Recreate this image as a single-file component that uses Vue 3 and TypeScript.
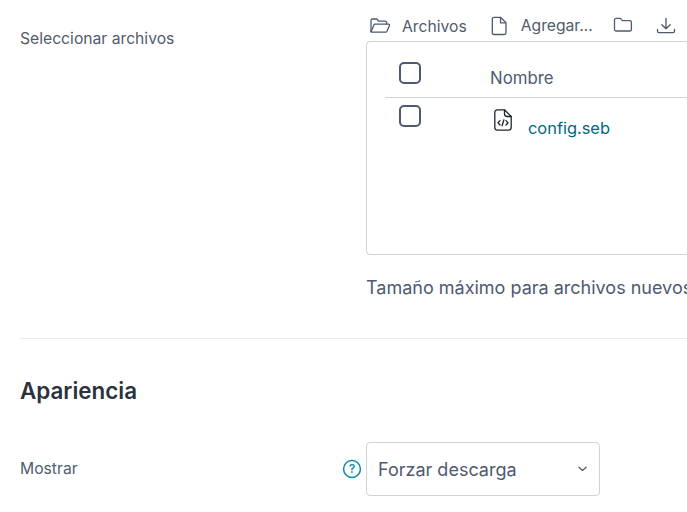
<script setup lang="ts">
const title = 'Apariencia'
</script>

<template>
  <div class="page">
    <section class="files">
      <div class="label">Seleccionar archivos</div>
      <div class="picker">
        <div class="toolbar">
          <svg class="t-icon open" viewBox="0 0 22 20" width="22" height="20" fill="none" stroke="#4d5a70" stroke-width="1.3" stroke-linejoin="round">
            <path d="M2 16V4.5C2 3.7 2.6 3 3.4 3h4.4l2 2.2h6.4c.8 0 1.4.6 1.4 1.4V8.5" />
            <path d="M2 16l3-7.3c.2-.4.5-.6 1-.6h13.6c.7 0 1.2.7.9 1.3l-2.7 6.1c-.2.4-.6.7-1 .7H3c-.6 0-1-.6-1-1.2z" />
          </svg>
          <span class="t-text archivos">Archivos</span>
          <svg class="t-icon file" viewBox="0 0 16 20" width="16" height="20" fill="none" stroke="#4d5a70" stroke-width="1.3" stroke-linejoin="round">
            <path d="M3 1.3h6.5L15 6.8v10c0 1-.8 1.7-1.7 1.7H3c-1 0-1.7-.8-1.7-1.7V3C1.3 2.1 2 1.3 3 1.3z" />
            <path d="M9.5 1.3v5.5H15" />
          </svg>
          <span class="t-text agregar">Agregar...</span>
          <svg class="t-icon folder" viewBox="0 0 20 18" width="20" height="18" fill="none" stroke="#4d5a70" stroke-width="1.3" stroke-linejoin="round">
            <path d="M1.5 4c0-.9.7-1.6 1.6-1.6h4.3l2 2.2h7.4c.9 0 1.6.7 1.6 1.6v7.2c0 .9-.7 1.6-1.6 1.6H3.1c-.9 0-1.6-.7-1.6-1.6V4z" />
          </svg>
          <svg class="t-icon download" viewBox="0 0 20 18" width="20" height="18" fill="none" stroke="#4d5a70" stroke-width="1.3" stroke-linecap="round" stroke-linejoin="round">
            <path d="M10 1.5v10M5.8 7.8l4.2 4 4.2-4" />
            <path d="M1.5 12.5v1.8c0 .9.6 1.4 1.4 1.4h14.2c.8 0 1.4-.5 1.4-1.4v-1.8" />
          </svg>
        </div>
        <div class="box">
          <div class="row head">
            <span class="check"></span>
            <span class="name">Nombre</span>
          </div>
          <div class="row item">
            <span class="check"></span>
            <svg class="code" viewBox="0 0 18 22" width="18" height="22" fill="none" stroke="#1f2630" stroke-width="1.3" stroke-linejoin="round" stroke-linecap="round">
              <path d="M3.2.8h7.3l6.7 6.7v10.7c0 1.6-1.2 2.9-2.8 2.9H3.2C1.7 21 .8 19.8.8 18.2V3.6C.8 2 1.7.8 3.2.8z" />
              <path d="M10.5.8v4c0 1.5 1.2 2.7 2.7 2.7h4" />
              <path d="M6 11.6l-2 2.2 2 2.2M12 11.6l2 2.2-2 2.2M9.9 10.8l-1.8 6" />
            </svg>
            <a class="link">config.seb</a>
          </div>
        </div>
        <p class="note">Tamaño máximo para archivos nuevos</p>
      </div>
    </section>

    <hr class="divider" />

    <h2 class="title">{{ title }}</h2>

    <section class="display">
      <div class="label-wrap">
        <span class="label">Mostrar</span>
        <svg class="help" viewBox="0 0 20 20" width="20" height="20" fill="none">
          <circle cx="10" cy="10" r="8.4" stroke="#0f8aa6" stroke-width="1.5" />
          <text x="10" y="14" text-anchor="middle" class="help-mark">?</text>
        </svg>
      </div>
      <div class="select">
        <span>Forzar descarga</span>
        <svg viewBox="0 0 10 6" width="9" height="6" fill="none" stroke="#4d5a70" stroke-width="1.4" stroke-linecap="round" stroke-linejoin="round">
          <path d="M1 1l4 3.6L9 1" />
        </svg>
      </div>
    </section>
  </div>
</template>

<style>
html,
body {
  margin: 0;
  background: #fff;
  overflow: hidden;
}
</style>

<style scoped>
.page {
  width: 687px;
  height: 512px;
  overflow: hidden;
  padding-left: 20px;
  box-sizing: border-box;
  font-family: Inter, "Liberation Sans", sans-serif;
  color: #4d5a70;
}
.files {
  display: flex;
}
.label {
  font-size: 15.7px;
  color: #515c6c;
}
.files > .label {
  width: 346px;
  flex: none;
  padding-top: 30px;
  line-height: 18px;
}
.picker {
  flex: none;
  width: 500px;
}
.toolbar {
  height: 41px;
  display: flex;
  align-items: center;
  padding: 11px 0 0 3px;
  box-sizing: border-box;
}
.t-text {
  font-size: 15.7px;
  color: #515c6c;
}
.archivos {
  margin-left: 11px;
}
.file {
  margin-left: 24px;
  margin-top: -1px;
}
.agregar {
  margin-left: 14px;
  margin-top: -1px;
}
.folder {
  margin-left: 20px;
  margin-top: -2px;
}
.download {
  margin-left: 23px;
}
.box {
  height: 214px;
  box-sizing: border-box;
  border: 1px solid #ced4da;
  border-radius: 4px 0 0 4px;
  padding-left: 18px;
}
.row {
  display: flex;
  position: relative;
  padding-left: 14px;
}
.head {
  height: 56px;
  border-bottom: 1px solid #ced4da;
  box-sizing: border-box;
}
.check {
  width: 22px;
  height: 22px;
  box-sizing: border-box;
  border: 2px solid #4d5a70;
  border-radius: 5px;
  margin-top: 20px;
  flex: none;
}
.item .check {
  margin-top: 7px;
}
.name {
  margin: 26px 0 0 69px;
  font-size: 16.8px;
  line-height: 20px;
  color: #4d5a70;
}
.code {
  margin: 11px 0 0 73px;
  flex: none;
}
.link {
  margin: 20px 0 0 16px;
  font-size: 16.4px;
  line-height: 20px;
  color: #00677f;
}
.note {
  margin: 22px 0 0;
  font-size: 18px;
  line-height: 22px;
  color: #4d5a70;
  white-space: nowrap;
}
.divider {
  border: 0;
  border-top: 1px solid #eaecf1;
  margin: 39px 0 0;
}
.title {
  margin: 39px 0 0;
  font-size: 22.4px;
  line-height: 26px;
  font-weight: 600;
  color: #2b323c;
}
.display {
  display: flex;
  margin-top: 38px;
  align-items: center;
}
.label-wrap {
  width: 346px;
  flex: none;
  display: flex;
  justify-content: space-between;
  align-items: center;
  box-sizing: border-box;
  padding-right: 4px;
}
.label-wrap .label {
  margin-top: -2px;
}
.help-mark {
  font-family: Inter, sans-serif;
  font-size: 12px;
  font-weight: 600;
  fill: #0f8aa6;
}
.select {
  width: 234px;
  height: 54px;
  box-sizing: border-box;
  border: 1px solid #ced4da;
  border-radius: 4px;
  padding: 0 12px 0 11px;
  display: flex;
  align-items: center;
  justify-content: space-between;
  font-size: 18px;
  color: #4d5a70;
}
</style>
